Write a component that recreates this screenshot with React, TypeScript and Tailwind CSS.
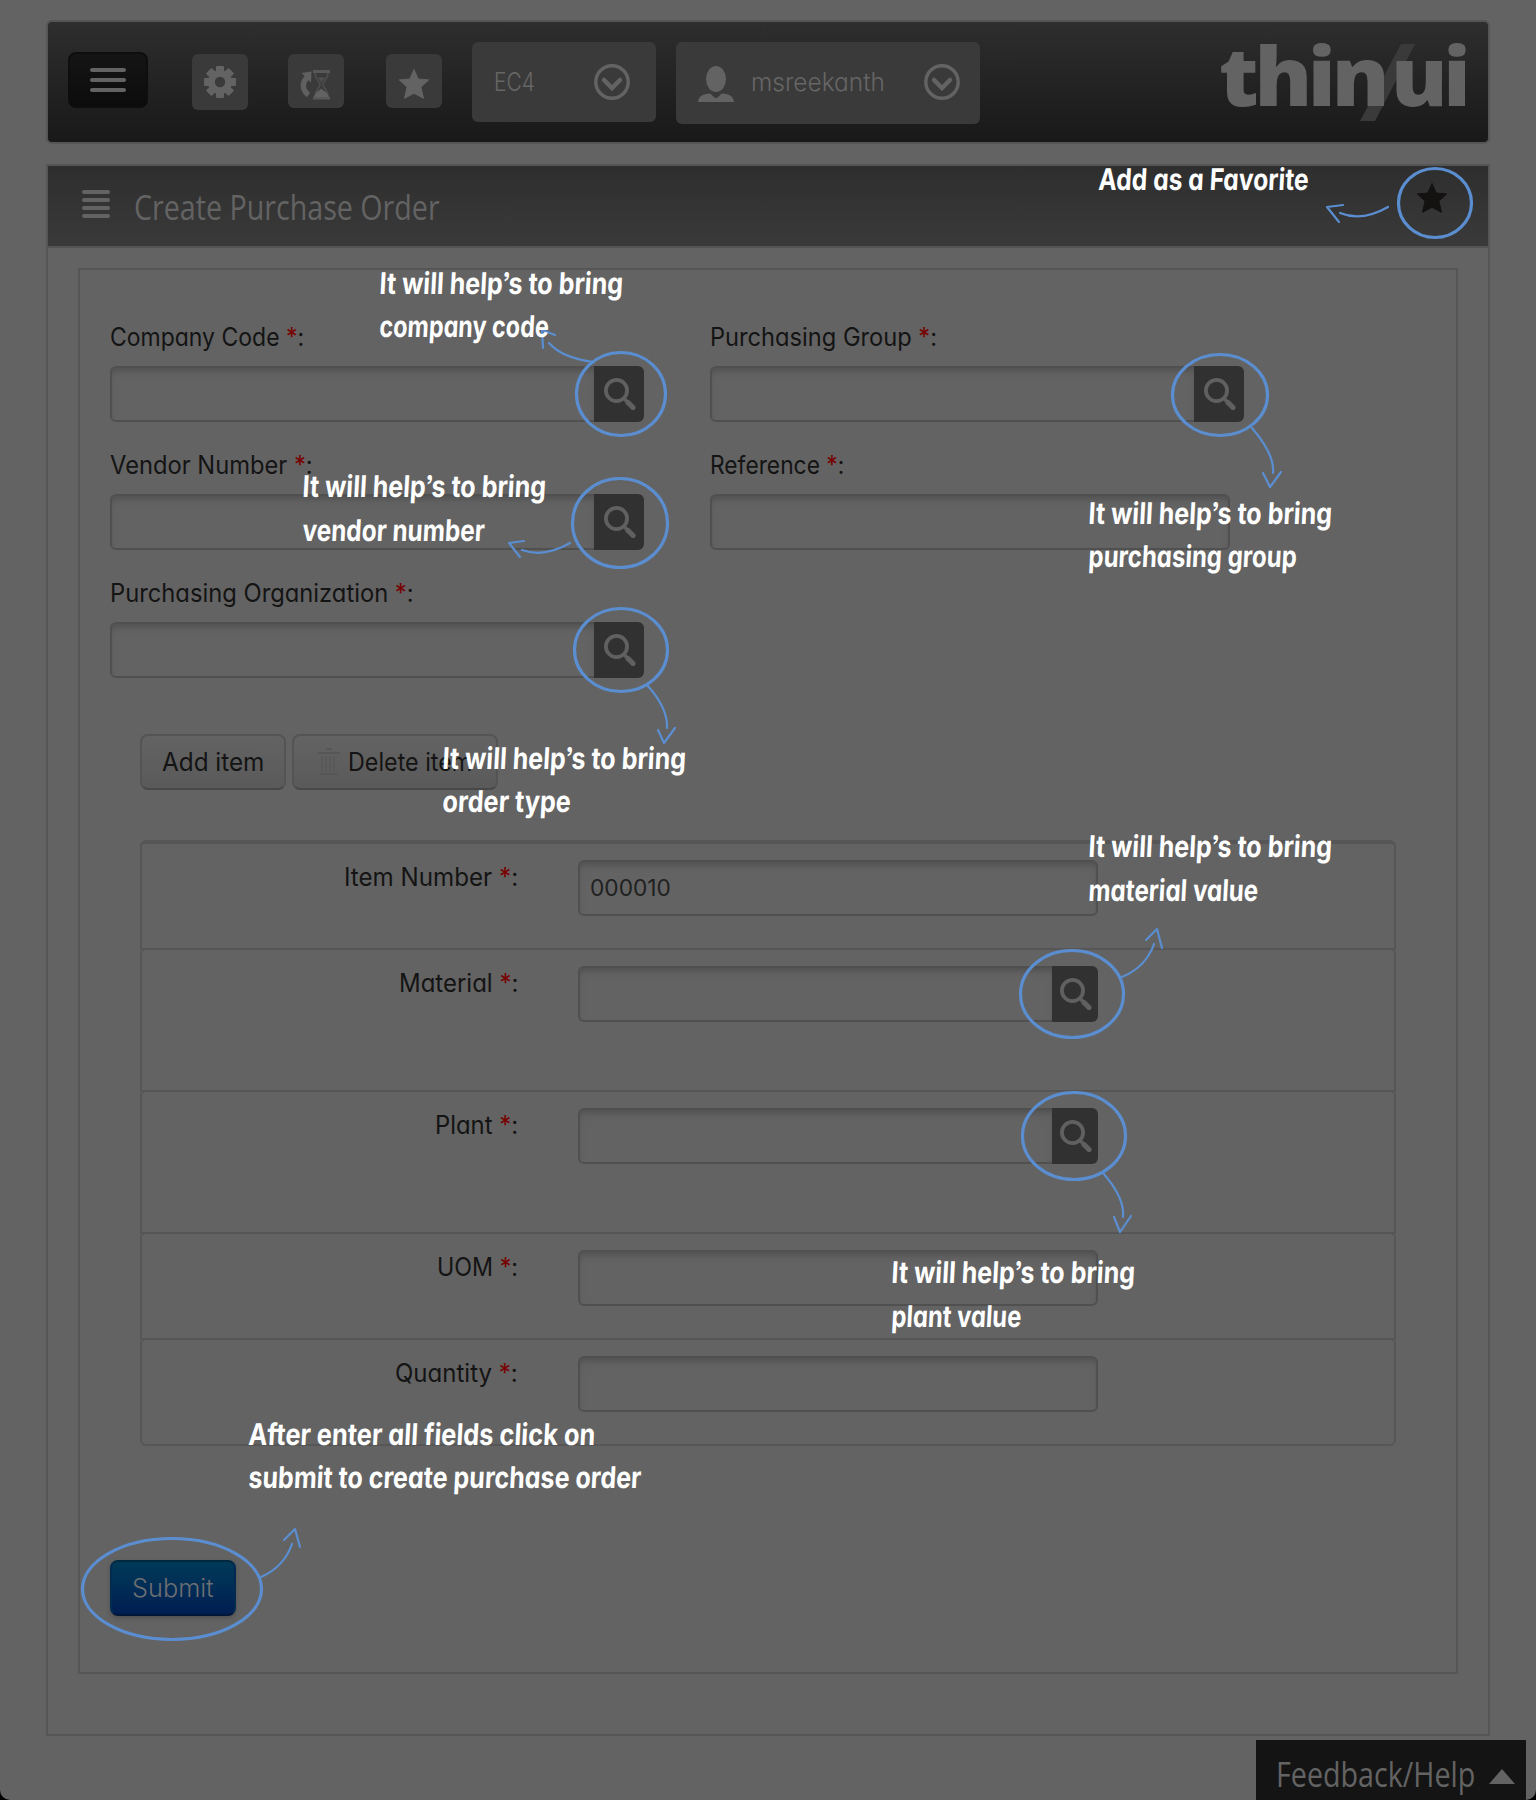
import { useLayoutEffect, useRef, useState, type ReactNode } from "react";

const UI = "font-['Inter','Open_Sans',sans-serif] [font-feature-settings:'cv11','ss03']";
const COND = "font-['Open_Sans','Noto_Sans',sans-serif]";

/* Text squeezed or stretched horizontally to an exact width. */
function Fit({ w, className = "", children }: { w: number; className?: string; children: ReactNode }) {
  const ref = useRef<HTMLSpanElement>(null);
  const [k, setK] = useState(1);
  useLayoutEffect(() => {
    if (ref.current) setK(w / ref.current.offsetWidth);
  }, [w]);
  return (
    <span className={`block shrink-0 whitespace-nowrap ${className}`} style={{ width: w }}>
      <span ref={ref} className="inline-block origin-left" style={{ transform: `scaleX(${k})` }}>
        {children}
      </span>
    </span>
  );
}

function Label({ text, w }: { text: string; w: number }) {
  return (
    <Fit w={w} className={`${UI} text-[25px] font-[380] leading-8 text-[#141414]`}>
      {text} <span className="text-[#780000]">*</span>:
    </Fit>
  );
}

function SearchIcon() {
  return (
    <svg width="32" height="32" viewBox="0 0 32 32" fill="none" stroke="#606060">
      <circle cx="12.5" cy="12.5" r="10.600" strokeWidth="3.800" />
      <path d="M20 20.500l2.500 2.500" strokeWidth="3.500" />
      <path d="M24 24.500l5 5" strokeWidth="5.200" strokeLinecap="round" />
    </svg>
  );
}

function Field({ size, search, narrow, value }: { size: string; search?: boolean; narrow?: boolean; value?: string }) {
  return (
    <div className={`flex h-14 ${size}`}>
      <div
        className={`flex flex-1 items-center border-2 border-[#505050] bg-[#636363] pl-[10px] shadow-[inset_0_5px_6px_-2px_#515151] ${
          search ? "rounded-l-md border-r-0" : "rounded-md"
        }`}
      >
        {value && <Fit w={81} className={`${UI} text-[23px] font-[380] leading-8 text-[#212121]`}>{value}</Fit>}
      </div>
      {search && (
        <div className={`flex justify-center rounded-r-md bg-[#313131] pl-0.5 pt-3 ${narrow ? "w-[46px]" : "w-[50px]"}`}>
          <SearchIcon />
        </div>
      )}
    </div>
  );
}

function FormItem({ text, w, size, search }: { text: string; w: number; size: string; search?: boolean }) {
  return (
    <div className="h-32">
      <div className="h-[45px]"><Label text={text} w={w} /></div>
      <Field size={size} search={search} />
    </div>
  );
}

function Chevron() {
  return (
    <svg width="36" height="36" viewBox="0 0 36 36" fill="none" stroke="#636363">
      <circle cx="18" cy="18" r="16.200" strokeWidth="3.400" />
      <path d="M10 16l8 8 8-8" strokeWidth="4.500" strokeLinecap="round" />
    </svg>
  );
}

function Star({ color }: { color: string }) {
  return (
    <svg width="32" height="32" viewBox="0 0 32 32">
      <path fill={color} stroke={color} strokeLinejoin="round" d="M16 1.500l4.200 9.500 10.500.9-7.800 7.200 2.600 11.200L16 25.300l-9.500 5 2.600-11.200L1.300 11.900l10.500-.9z" />
    </svg>
  );
}

function Gear() {
  return (
    <svg width="32" height="32" viewBox="0 0 32 32" fill="#636363">
      {[0, 45, 90, 135].map((a) => (
        <rect key={a} x="12" y="0" width="8" height="32" rx="1" transform={`rotate(${a} 16 16)`} />
      ))}
      <circle cx="16" cy="16" r="12" />
      <circle cx="16" cy="16" r="5.200" fill="#3a3a3a" />
    </svg>
  );
}

function History() {
  return (
    <svg width="32" height="32" viewBox="0 0 32 32">
      <path d="M9 9c-6.500 5-6 13 .5 18" fill="none" stroke="#606060" strokeWidth="5.500" />
      <path d="M2.500 5l10-1.500-.5 11z" fill="#606060" />
      <path d="M14 2h17v3H14zM14 28.500h17v3H14z" fill="#585858" />
      <path d="M16 5c0 6 5 8.500 5 11.500s-5 6-5 12M29 5c0 6-5 8.500-5 11.500s5 6 5 12" fill="none" stroke="#4c4c4c" strokeWidth="1.800" />
      <path d="M15.500 29c.5-5 4-5.500 6.500-8.500 3 3 7 3.500 7.500 8.500z" fill="#626262" />
      <path d="M19 9.500h7l-3.500 5z" fill="#505050" />
    </svg>
  );
}

function Person() {
  return (
    <svg width="36" height="36" viewBox="0 0 36 36" fill="#636363">
      <ellipse cx="18" cy="13" rx="10" ry="13" />
      <path d="M0 36c.5-6 5-8 11.500-8.500 3 1 3.500 4 6.500 4.500 3-.5 3.500-3.500 6.500-4.500C31 28 35.500 30 36 36z" />
    </svg>
  );
}

function ItemRow({ text, w, row, search, value }: { text: string; w: number; row: string; search?: boolean; value?: string }) {
  return (
    <div className={`-mx-0.5 flex rounded-md border-2 border-[#565656] ${row}`}>
      <div className="flex w-[376px] justify-end pt-px"><Label text={text} w={w} /></div>
      <div className="ml-[60px]"><Field size="w-[520px]" search={search} narrow value={value} /></div>
    </div>
  );
}

type Line = { x: number; base: number; w: number; text: string };
const notes: Line[] = [
  { x: 1098, base: 190, w: 210, text: "Add as a Favorite" },
  { x: 379, base: 294, w: 244, text: "It will help’s to bring" },
  { x: 379, base: 337, w: 169, text: "company code" },
  { x: 302, base: 497, w: 244, text: "It will help’s to bring" },
  { x: 302, base: 541, w: 182, text: "vendor number" },
  { x: 1088, base: 524, w: 244, text: "It will help’s to bring" },
  { x: 1088, base: 567, w: 208, text: "purchasing group" },
  { x: 442, base: 769, w: 244, text: "It will help’s to bring" },
  { x: 442, base: 812, w: 128, text: "order type" },
  { x: 1088, base: 857, w: 244, text: "It will help’s to bring" },
  { x: 1088, base: 901, w: 170, text: "material value" },
  { x: 891, base: 1283, w: 244, text: "It will help’s to bring" },
  { x: 891, base: 1327, w: 130, text: "plant value" },
  { x: 248, base: 1445, w: 347, text: "After enter all fields click on" },
  { x: 248, base: 1488, w: 393, text: "submit to create purchase order" },
];

/* left, top, right, bottom of each ring */
const rings = [
  [1397, 167, 1473, 239],
  [575, 351, 667, 437],
  [571, 477, 669, 569],
  [1171, 353, 1269, 437],
  [573, 607, 669, 693],
  [1019, 949, 1125, 1039],
  [1021, 1091, 1127, 1181],
  [81, 1537, 263, 1641],
];

const arrows = [
  "M1388 207Q1362 222 1340 213M1343 205L1327 207L1339 222",
  "M594 362Q562 358 549 343M555 335L542 330L543 348",
  "M570 543Q544 558 522 550M524 541L509 543L520 557",
  "M1252 428Q1275 455 1273 473M1263 473L1270 487L1281 472",
  "M647 685Q668 708 667 728M658 730L664 743L675 728",
  "M1122 977Q1146 967 1154 944M1146 940L1157 929L1162 948",
  "M1103 1173Q1125 1198 1123 1217M1114 1217L1120 1232L1131 1216",
  "M261 1577Q284 1567 292 1544M284 1540L295 1529L300 1547",
];

function Tour() {
  return (
    <div className="pointer-events-none absolute inset-0">
      <svg className="absolute inset-0" width="1536" height="1800" fill="none" stroke="#5b8ed0" strokeLinecap="round" strokeLinejoin="round">
        {rings.map(([l, t, r, b]) => (
          <ellipse key={`${l}-${t}`} cx={(l + r) / 2} cy={(t + b) / 2} rx={(r - l) / 2 - 1.5} ry={(b - t) / 2 - 1.5} strokeWidth="3.200" />
        ))}
        {arrows.map((d) => <path key={d} d={d} strokeWidth="2.200" />)}
      </svg>
      {notes.map((n) => (
        <div key={`${n.x}-${n.base}`} className="absolute origin-[0_31px] -skew-x-3" style={{ left: n.x, top: n.base - 31 }}>
          <Fit w={n.w} className={`${UI} text-[30px] font-bold leading-10 text-white`}>{n.text}</Fit>
        </div>
      ))}
    </div>
  );
}

export default function App() {
  return (
    <div className="h-[1800px] w-[1536px] overflow-hidden bg-black">
      <div className="relative h-[1800px] w-[1536px] overflow-hidden rounded-b-[10px] bg-[#636363] px-[46px] pt-5">
        <header className="flex h-[124px] items-start rounded-md border-2 border-[#555] bg-linear-to-b from-[#2e2e2e] to-[#191919] pl-5">
          <div className="mt-[30px] flex h-14 w-20 flex-col items-center justify-center gap-1.5 rounded-lg border-2 border-[#0e0e0e] bg-linear-to-b from-[#151515] to-[#0c0c0c]">
            <span className="h-1 w-9 rounded-full bg-[#636363]" />
            <span className="h-1 w-9 rounded-full bg-[#636363]" />
            <span className="h-1 w-9 rounded-full bg-[#636363]" />
          </div>
          <div className="ml-11 mt-8 flex size-14 items-center justify-center rounded-md bg-[#3a3a3a]"><Gear /></div>
          <div className="ml-10 mt-8 flex h-[54px] w-14 justify-center rounded-md bg-[#3a3a3a] pr-0.5 pt-3.5"><History /></div>
          <div className="ml-[42px] mt-8 flex h-[54px] w-14 justify-center rounded-md bg-[#3a3a3a] pt-3.5"><Star color="#636363" /></div>
          <div className="ml-[30px] mt-5 flex h-20 w-[184px] items-start justify-between rounded-md bg-[#3a3a3a] pl-[22px] pr-[26px] pt-[22px]">
            <Fit w={41} className={`${UI} text-[25px] font-light leading-9 text-[#666]`}>EC4</Fit>
            <Chevron />
          </div>
          <div className="ml-5 mt-5 flex h-[82px] w-[304px] items-start rounded-md bg-[#3a3a3a] pl-[22px] pt-[22px]">
            <div className="mt-0.5"><Person /></div>
            <Fit w={134} className={`${UI} ml-[17px] text-[25px] font-light leading-9 text-[#666]`}>msreekanth</Fit>
            <div className="ml-[39px]"><Chevron /></div>
          </div>
          <div className="relative ml-auto mr-[21px] mt-[3px] flex gap-[6px]">
            <svg className="absolute left-[141px] top-[19px]" width="58" height="78" viewBox="0 0 58 78">
              <path d="M0 77L41 0h14L15 77z" fill="#3a3a3a" />
            </svg>
            <Fit w={166} className={`${COND} relative text-[81px] font-extrabold leading-[100px] tracking-[-4px] text-[#636363]`}>thin</Fit>
            <Fit w={76} className={`${COND} relative text-[81px] font-extrabold leading-[100px] tracking-[-4px] text-[#636363]`}>ui</Fit>
          </div>
        </header>

        <main className="mt-5 h-[1572px] border-2 border-[#555]">
          <div className="flex h-[82px] items-start border-b-2 border-[#555] bg-linear-to-b from-[#2e2e2e] to-[#3a3a3a] pl-[34px]">
            <div className="mt-6 flex w-7 flex-col gap-1">
              <span className="h-1 rounded-sm bg-[#636363]" />
              <span className="h-1 rounded-sm bg-[#636363]" />
              <span className="h-1 rounded-sm bg-[#636363]" />
              <span className="h-1 rounded-sm bg-[#636363]" />
            </div>
            <Fit w={306} className={`${COND} ml-6 mt-[17px] text-[35px] leading-12 text-[#636363]`}>Create Purchase Order</Fit>
            <div className="ml-auto mr-10 mt-4"><Star color="#141111" /></div>
          </div>

          <div className="mx-[30px] mt-5 h-[1406px] border-2 border-[#555] pl-[30px] pt-[51px]">
            <div className="grid grid-cols-[600px_600px]">
              <FormItem text="Company Code" w={194} size="w-[534px]" search />
              <FormItem text="Purchasing Group" w={227} size="w-[534px]" search />
              <FormItem text="Vendor Number" w={203} size="w-[534px]" search />
              <FormItem text="Reference" w={134} size="w-[520px]" />
              <FormItem text="Purchasing Organization" w={304} size="w-[534px]" search />
            </div>

            <div className="ml-[30px] mt-[29px] flex gap-1.5">
              <div className="flex h-14 w-[146px] items-center justify-center rounded-lg border-2 border-[#545454] border-b-[#484848] bg-linear-to-b from-[#636363] to-[#5a5a5a]">
                <Fit w={102} className={`${UI} text-[25px] font-[380] leading-8 text-[#141414]`}>Add item</Fit>
              </div>
              <div className="flex h-14 w-[206px] items-center rounded-lg border-2 border-[#545454] border-b-[#484848] bg-linear-to-b from-[#636363] to-[#5a5a5a] pl-6">
                <svg width="22" height="30" viewBox="0 0 22 30" fill="none" stroke="#565656" strokeWidth="2">
                  <path d="M0 6h22M8 2h6M2 27h18" />
                  <path d="M4 9v16M8 9v16M12 9v16M16 9v16" stroke="#595959" />
                </svg>
                <Fit w={124} className={`${UI} ml-2 text-[25px] font-[380] leading-8 text-[#141414]`}>Delete item</Fit>
              </div>
            </div>

            <div className="ml-[30px] mt-[50px] h-[606px] w-[1256px] px-0.5">
              <ItemRow text="Item Number" w={174} row="h-[110px] rounded-b-none border-t-4 pt-4" value="000010" />
              <ItemRow text="Material" w={119} row="-mt-0.5 h-36 rounded-b-none pt-4" search />
              <ItemRow text="Plant" w={83} row="-mt-0.5 h-36 rounded-b-none pt-4" search />
              <ItemRow text="UOM" w={81} row="-mt-0.5 h-[108px] rounded-b-none pt-4" />
              <ItemRow text="Quantity" w={123} row="-mt-0.5 h-[108px] pt-4" />
            </div>

            <div className="mt-[114px] flex h-14 w-[126px] items-center justify-center rounded-lg border-2 border-t-[#00283e] border-x-[#002a50] border-b-[#001838] bg-linear-to-b from-[#003a58] to-[#001d52] shadow-[0_2px_4px_#505050]">
              <Fit w={82} className={`${UI} -mt-px text-[25px] font-[350] leading-8 text-[#6c6f72]`}>Submit</Fit>
            </div>
          </div>
        </main>

        <Tour />

        <div className="absolute bottom-0 right-[10px] flex h-[60px] w-[270px] items-start bg-[#141414] pl-5">
          <Fit w={199} className={`${COND} mt-[10px] text-[35px] leading-12 text-[#636363]`}>Feedback/Help</Fit>
          <svg className="ml-3.5 mt-[29px]" width="26" height="15" viewBox="0 0 26 15"><path d="M13 0l13 15H0z" fill="#636363" /></svg>
        </div>
      </div>
    </div>
  );
}
